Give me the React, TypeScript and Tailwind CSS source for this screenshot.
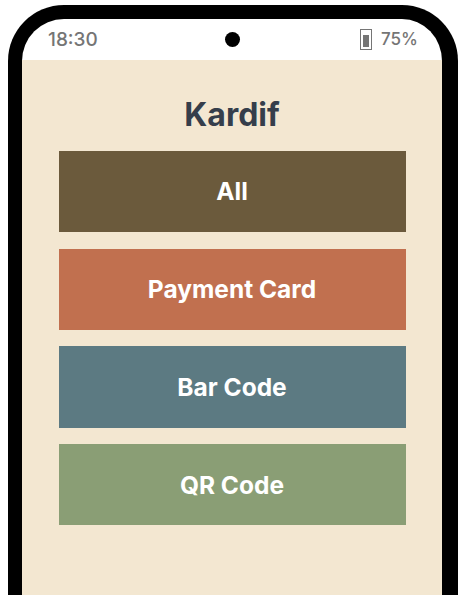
import React from "react";

const buttons = [
  { label: "All", color: "bg-[#6b5a3c]", text: "" },
  { label: "Payment Card", color: "bg-[#c1704f]", text: "" },
  { label: "Bar Code", color: "bg-[#5c7a82]", text: "" },
  { label: "QR Code", color: "bg-[#8a9e75]", text: "pt-[1px]" },
];

const App: React.FC = () => {
  return (
    <div className="h-[596px] w-[467px] overflow-hidden bg-white pl-2 pt-[5px] font-['Inter',sans-serif]">
      <div className="h-[590px] w-[450px] overflow-hidden rounded-t-[56px] border-l-[14px] border-r-[16px] border-t-[14px] border-black bg-white">
        {/* status bar */}
        <div className="relative flex h-[41px] items-center justify-between pl-[26px] pr-[24px] leading-none text-[#757575]">
          <span className="text-[19px] font-medium">18:30</span>
          <div className="absolute left-[203px] top-[13px] h-[15px] w-[15px] rounded-full bg-black" />
          <div className="flex items-center gap-[9px] text-[17px] font-medium">
            <svg width="12" height="21" viewBox="0 0 12 21">
              <rect x="0.5" y="0.5" width="11" height="20" fill="none" stroke="#757575" />
              <rect x="3" y="6" width="6" height="12" fill="#757575" />
            </svg>
            <span>75%</span>
          </div>
        </div>
        {/* screen */}
        <div className="flex h-[535px] flex-col items-center bg-[#f3e7d1]">
          <h1 className="mt-[39px] text-[32px] font-bold leading-none text-[#353e4b]">Kardif</h1>
          <div className="mt-[20px] flex w-[347px] flex-col gap-[16.33px]">
            {buttons.map((b) => (
              <div
                key={b.label}
                className={`flex h-[81.33px] items-center justify-center text-[24.5px] font-bold text-white ${b.color} ${b.text}`}
              >
                {b.label}
              </div>
            ))}
          </div>
        </div>
      </div>
    </div>
  );
};

export default App;
